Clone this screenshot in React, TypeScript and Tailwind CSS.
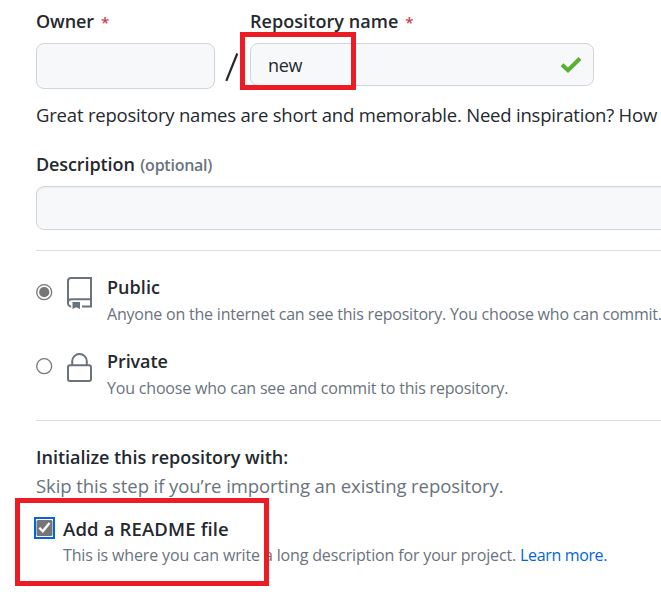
import type { ReactNode } from "react";

function Label({ children, className }: { children: ReactNode; className: string }) {
  return <div className={`h-6 whitespace-nowrap font-semibold leading-6 text-[#24292e] ${className}`}>{children}</div>;
}

function Note({ children, className }: { children: ReactNode; className: string }) {
  return <div className={`h-6 whitespace-nowrap text-[16px] leading-6 text-[#6a737d] ${className}`}>{children}</div>;
}

function Required() {
  return <span className="ml-[7px] text-[15px] font-semibold text-[#d73a49]">*</span>;
}

function Radio({ checked }: { checked?: boolean }) {
  return (
    <svg className="mt-[9px] block shrink-0" width="17" height="17" viewBox="0 0 17 17">
      <circle cx="8.2" cy="8.2" r="7.500" fill="#fff" stroke="#767676" strokeWidth="1.3" />
      {checked && <circle cx="8.2" cy="8.2" r="5.1" fill="#767676" />}
    </svg>
  );
}

function RepoIcon() {
  return (
    <svg className="ml-[14px] mt-[2px] block shrink-0" width="26" height="33" viewBox="0 0 26 33" fill="none" stroke="#6a737d" strokeWidth="2">
      <path d="M4.200 29.400A3 3 0 0 1 1 26.500V4A3 3 0 0 1 4 1H24V29.500H15" />
      <path d="M1 26A3.300 3.300 0 0 1 4.300 22.300H24" />
      <path d="M5.500 25H13V32L9.250 30.300L5.500 32Z" fill="#6a737d" stroke="none" />
    </svg>
  );
}

function LockIcon() {
  return (
    <svg className="ml-[14px] mt-[4px] block shrink-0" width="26" height="29" viewBox="0 0 26 29" fill="none" stroke="#6a737d" strokeWidth="2">
      <rect x="1" y="12.300" width="23" height="15.700" rx="2" />
      <path d="M5.200 12.300V8.300A7.300 7.300 0 0 1 19.800 8.300V12.300" />
    </svg>
  );
}

export default function App() {
  return (
    <main className="relative h-[592px] w-[661px] overflow-hidden bg-white pl-9 pt-[9px] font-['Open_Sans','Noto_Sans',sans-serif]">
      <div className="flex">
        <div className="w-[179px]">
          <Label className="text-[18px] tracking-[-0.1px]">Owner<Required /></Label>
          <div className="mt-[10px] h-[46px] rounded-[8px] border border-[#d1d5da] bg-[#f6f8fa]" />
        </div>
        <svg className="mt-[44px] ml-[10px] block shrink-0" width="15" height="30" viewBox="0 0 15 30">
          <path d="M1.300 27.800L12.300 0.500" stroke="#24292e" strokeWidth="2.200" />
        </svg>
        <div className="ml-[10px] w-[344px]">
          <Label className="text-[18px] tracking-[0.06px]">Repository name<Required /></Label>
          <div className="mt-[10px] flex h-[43px] items-center justify-between rounded-[8px] border border-[#d1d5da] bg-[#f6f8fa] pl-[17px] pr-[11px] text-[18px] text-[#24292e]">
            <span className="pt-0.5 tracking-[-0.3px]">new</span>
            <svg width="22" height="18" viewBox="0 0 22 18">
              <path d="M2 8.700L8 14.200L20 2.500" fill="none" stroke="#58b030" strokeWidth="4" />
            </svg>
          </div>
        </div>
      </div>
      <div className="mt-[14px] h-6 whitespace-nowrap text-[18.5px] leading-6 tracking-[-0.2px] text-[#24292e]">Great repository names are short and memorable. Need inspiration? How</div>
      <Label className="mt-[25px] text-[18px] tracking-[-0.1px]">
        Description <span className="ml-px text-[16px] font-semibold tracking-[-0.25px] text-[#6a737d]">(optional)</span>
      </Label>
      <div className="mt-[10px] h-[44px] w-[700px] rounded-[8px] border border-[#d1d5da] bg-[#f6f8fa] shadow-[inset_0_1px_2px_rgba(27,31,35,0.05)]" />
      <hr className="mt-5 border-t border-[#d8dfe5]" />
      <section className="flex pt-6">
        <Radio checked />
        <RepoIcon />
        <div className="ml-[14px]">
          <Label className="text-[18px] tracking-[0.05px]">Public</Label>
          <Note className="mt-[3px] tracking-[-0.21px]">Anyone on the internet can see this repository. You choose who can commit.</Note>
        </div>
      </section>
      <section className="flex pt-[23px]">
        <Radio />
        <LockIcon />
        <div className="ml-[14px]">
          <Label className="text-[18px] tracking-[-0.1px]">Private</Label>
          <Note className="mt-[3px] tracking-[-0.19px]">You choose who can see and commit to this repository.</Note>
        </div>
      </section>
      <hr className="mt-5 border-t border-[#d8dfe5]" />
      <Label className="mt-6 text-[18px] tracking-[-0.02px]">Initialize this repository with:</Label>
      <div className="mt-[5px] h-6 whitespace-nowrap text-[18.5px] leading-6 tracking-[-0.08px] text-[#6a737d]">Skip this step if you’re importing an existing repository.</div>
      <div className="mt-[19px] flex">
        <svg className="-ml-[2px] block shrink-0" width="21" height="22" viewBox="0 0 21 22">
          <rect x="1" y="1" width="19" height="20" fill="#fff" stroke="#0366d6" strokeWidth="2" />
          <rect x="2.500" y="3" width="16" height="16" rx="1.500" fill="#767676" />
          <path d="M5.300 10.800L8.800 14.200L15.500 6" fill="none" stroke="#fff" strokeWidth="2.300" />
        </svg>
        <div className="ml-2">
          <Label className="text-[18.5px] tracking-[0.15px]">Add a README file</Label>
          <Note className="mt-[2px] tracking-[-0.15px]">This is where you can write a long description for your project. <span className="tracking-[-0.35px] text-[#0366d6]">Learn more.</span></Note>
        </div>
      </div>
      <div className="absolute left-[240px] top-[32px] h-[58px] w-[116px] border-5 border-[#ed1c24]" />
      <div className="absolute left-[15px] top-[498px] h-[88px] w-[254px] border-5 border-[#ed1c24]" />
    </main>
  );
}
